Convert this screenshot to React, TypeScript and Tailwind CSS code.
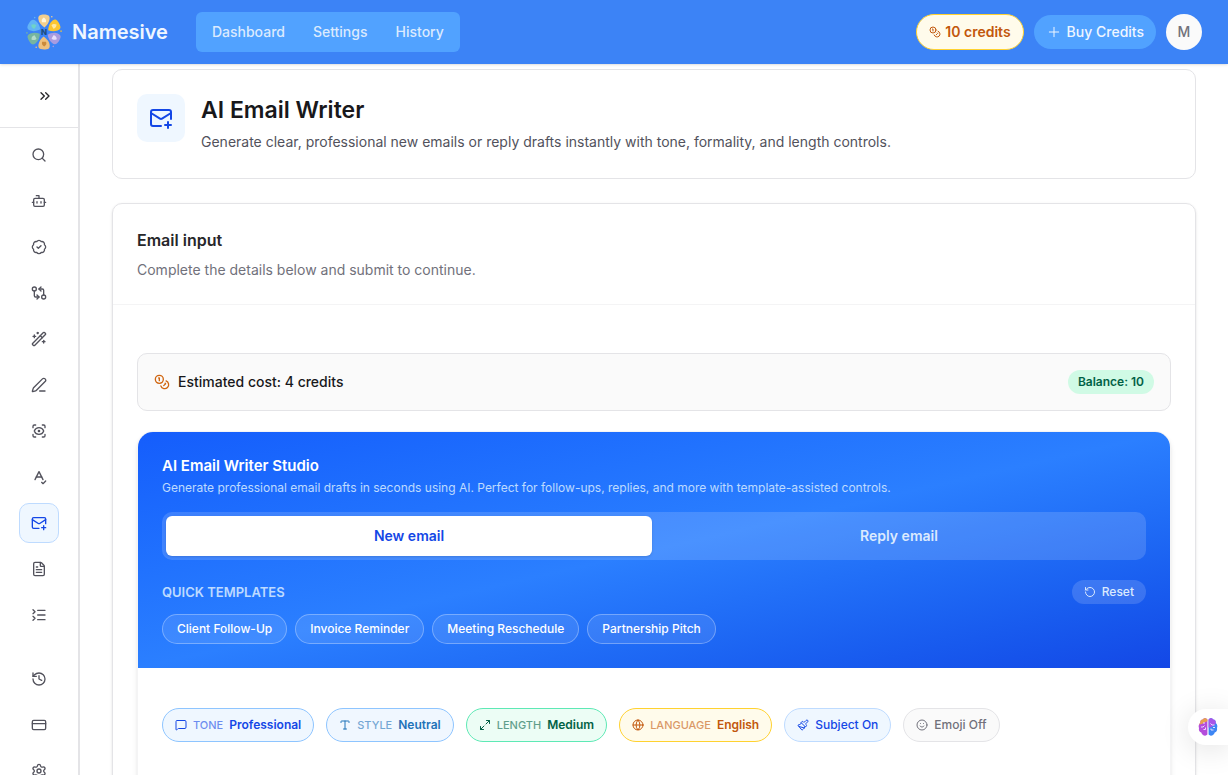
import React from "react";
import {
  BadgeCheck,
  Bot,
  ChevronsRight,
  Coins,
  CreditCard,
  FileText,
  GitCompareArrows,
  Globe,
  History,
  ListCollapse,
  MailPlus,
  Maximize2,
  MessageSquare,
  Paintbrush,
  PenLine,
  Plus,
  RotateCcw,
  ScanEye,
  Search,
  Settings,
  Smile,
  SpellCheck,
  Type,
  WandSparkles,
  type LucideIcon,
} from "lucide-react";

const TOOLS: { label: string; icon: LucideIcon; active?: boolean }[] = [
  { label: "Search", icon: Search },
  { label: "AI chat", icon: Bot },
  { label: "AI checker", icon: BadgeCheck },
  { label: "Paraphraser", icon: GitCompareArrows },
  { label: "Humanizer", icon: WandSparkles },
  { label: "Writer", icon: PenLine },
  { label: "Detector", icon: ScanEye },
  { label: "Grammar", icon: SpellCheck },
  { label: "Email writer", icon: MailPlus, active: true },
  { label: "Documents", icon: FileText },
  { label: "Summarizer", icon: ListCollapse },
];

const ACCOUNT: { label: string; icon: LucideIcon; active?: boolean }[] = [
  { label: "History", icon: History },
  { label: "Billing", icon: CreditCard },
  { label: "Settings", icon: Settings },
];

const TEMPLATES = ["Client Follow-Up", "Invoice Reminder", "Meeting Reschedule", "Partnership Pitch"];

const OPTIONS = [
  { label: "Tone", value: "Professional", icon: MessageSquare, style: "border-[#8ec5ff] bg-[#eff7ff] text-blue-700" },
  { label: "Style", value: "Neutral", icon: Type, style: "border-[#8ec5ff] bg-[#f0f7ff] text-[#1f72b8]" },
  { label: "Length", value: "Medium", icon: Maximize2, style: "border-emerald-300 bg-emerald-50 text-emerald-800" },
  { label: "Language", value: "English", icon: Globe, style: "border-amber-300 bg-amber-50 text-[#c2570c]" },
];

const PETALS = [
  { angle: 0, fill: "#f3cf8e", dot: "#fff6df" },
  { angle: 60, fill: "#fbc62f", dot: "#fde9a4" },
  { angle: 120, fill: "#a99be0", dot: "#e6dffb" },
  { angle: 180, fill: "#eec07c", dot: "#c98a3c" },
  { angle: 240, fill: "#76b5a0", dot: "#b5dccb" },
  { angle: 300, fill: "#62b4f5", dot: "#6fd3c8" },
];

function Logo() {
  return (
    <svg viewBox="0 0 36 36" className="size-9" aria-hidden="true">
      {PETALS.map((p) => (
        <g key={p.angle} transform={`rotate(${p.angle} 18 18)`}>
          <path
            d="M18.500 13.500C15.500 11.500 12.600 8.500 12.300 4.800C12.100 2.200 13.200 1 15.500.7C17.500.4 19.500.5 21.200 1C23.300 1.600 24 3 23.500 5.500C22.800 8.800 21 11.500 18.500 13.500Z"
            fill={p.fill}
          />
          <path d="M16 8.200C15 6.500 16 4.500 17.800 3.400C19.800 4.500 20.600 6.500 19.800 8.200Z" fill={p.dot} />
          <circle cx="25.800" cy="2.800" r=".8" fill={p.fill} />
        </g>
      ))}
      <text x="18" y="21" textAnchor="middle" fontSize="8" fontWeight="800" fontFamily="Inter, sans-serif" fill="#1f4c7c">
        N
      </text>
    </svg>
  );
}

function BrainIcon() {
  return (
    <svg viewBox="0 0 20 20" className="size-5" aria-hidden="true">
      <path d="M9.400 2.500C8 .6 5.600.9 4.900 2.600C3 2.700 1.900 4.300 2.300 6C.6 7.200.3 9.500 1 11C.4 13.200 1.600 15 3.300 15.500C3.800 18.200 7.500 20 9.400 17.600Z" fill="#b44ddb" />
      <path d="M9.400 2.500C8 .6 5.600.9 4.900 2.600C3 2.700 1.900 4.300 2.300 6C1.600 6.500 1.200 7 1 7.600C3.500 7.500 6 5.500 9.400 4.200Z" fill="#e8a04d" />
      <path d="M10.600 2.500C12 .6 14.400.9 15.100 2.600C17 2.700 18.100 4.300 17.700 6C19.400 7.200 19.700 9.500 19 11C19.600 13.200 18.400 15 16.700 15.500C16.200 18.200 12.500 20 10.600 17.600Z" fill="#3d86f4" />
      <path d="M10.600 2.500C12 .6 14.400.9 15.100 2.600C17 2.700 18.100 4.300 17.700 6C17 8.500 13 10.500 10.600 10.500Z" fill="#a855e8" />
      <path
        d="M3 10H5L6.500 8.500M5.500 12.500H7.500V10.500M5 6H7M12.500 6.500L14 8H16.500M13 11.500V13H15.500M15 10.500H17"
        fill="none"
        stroke="#e9ddff"
        strokeWidth="1"
      />
    </svg>
  );
}

function SideLink({ label, icon: Icon, active }: { label: string; icon: LucideIcon; active?: boolean }) {
  return (
    <a
      href="#"
      aria-label={label}
      className={`flex size-10 shrink-0 items-center justify-center rounded-[10px] border ${
        active ? "border-blue-200 bg-[#eff7ff] text-blue-700" : "border-transparent text-zinc-600"
      }`}
    >
      <Icon className="size-4" />
    </a>
  );
}

function Header() {
  return (
    <header className="relative z-10 flex h-16 shrink-0 items-center justify-between bg-[#3c83f6] px-[26px] shadow-sm">
      <div className="flex items-center gap-7">
        <a href="#" className="flex items-center gap-[10px] text-xl font-semibold text-blue-50">
          <Logo />
          Namesive
        </a>
        <nav className="flex h-10 items-center gap-7 rounded-md bg-[#51a2ff] px-4 text-sm font-medium text-blue-100">
          <a href="#">Dashboard</a>
          <a href="#">Settings</a>
          <a href="#">History</a>
        </nav>
      </div>
      <div className="flex items-center gap-[10px]">
        <a
          href="#"
          className="flex h-9 items-center gap-1 rounded-full border border-amber-300 bg-amber-50 px-3 text-sm font-semibold text-[#c2570c]"
        >
          <Coins className="size-3" />
          10 credits
        </a>
        <button type="button" className="flex h-[34px] items-center gap-[5px] rounded-full bg-[#51a2ff] px-3 text-sm font-medium text-blue-50">
          <Plus className="size-4" strokeWidth={1.5} />
          Buy Credits
        </button>
        <button type="button" className="size-9 rounded-full bg-zinc-50 text-sm font-medium text-zinc-500">
          M
        </button>
      </div>
    </header>
  );
}

function Sidebar() {
  return (
    <aside className="flex w-20 shrink-0 flex-col border-r-2 border-zinc-200 bg-white">
      <div className="flex h-16 shrink-0 items-center justify-end border-b border-zinc-200 px-[17px]">
        <button type="button" aria-label="Expand sidebar" className="flex size-8 items-center justify-center text-zinc-800">
          <ChevronsRight className="size-4" />
        </button>
      </div>
      <nav className="flex flex-col items-center gap-[6px] py-[7px]">
        {TOOLS.map((item) => (
          <SideLink key={item.label} {...item} />
        ))}
      </nav>
      <nav className="flex flex-col items-center gap-[6px] pt-[17px]">
        {ACCOUNT.map((item) => (
          <SideLink key={item.label} {...item} />
        ))}
      </nav>
    </aside>
  );
}

function Studio() {
  return (
    <section className="mt-5 overflow-hidden rounded-2xl border border-zinc-100 bg-white shadow-md">
      <div className="bg-linear-to-br from-[#155dfc] via-[#2b7fff] to-[#1447e6] p-6 text-white">
        <h3 className="text-[15px] leading-5 font-semibold">AI Email Writer Studio</h3>
        <p className="mt-1 text-xs text-blue-200">
          Generate professional email drafts in seconds using AI. Perfect for follow-ups, replies, and more with
          template-assisted controls.
        </p>
        <div className="mt-4 grid grid-cols-2 gap-1 rounded-[10px] bg-white/15 p-1 text-sm font-semibold">
          <button type="button" className="h-10 rounded-md bg-white text-blue-700 shadow-sm">
            New email
          </button>
          <button type="button" className="h-10 rounded-md text-blue-100">
            Reply email
          </button>
        </div>
        <div className="mt-5 flex items-center justify-between">
          <h4 className="text-[13px] leading-4 font-semibold text-blue-200 uppercase">Quick templates</h4>
          <button type="button" className="flex h-6 items-center gap-[6px] rounded-full bg-white/15 px-3 text-xs font-medium text-blue-100">
            <RotateCcw className="size-3" />
            Reset
          </button>
        </div>
        <div className="mt-[10px] flex flex-wrap gap-2">
          {TEMPLATES.map((name) => (
            <button key={name} type="button" className="h-[30px] rounded-full border border-white/30 bg-white/10 px-[14px] text-xs font-medium">
              {name}
            </button>
          ))}
        </div>
      </div>
      <div className="flex flex-wrap gap-3 px-6 py-10">
        {OPTIONS.map(({ label, value, icon: Icon, style }) => (
          <button key={label} type="button" className={`flex h-[34px] items-center gap-[6px] rounded-full border px-3 text-xs font-semibold ${style}`}>
            <Icon className="size-3" />
            <span className="text-[11px] font-medium uppercase opacity-60">{label}</span>
            {value}
          </button>
        ))}
        <button type="button" className="flex h-[34px] items-center gap-[6px] rounded-full border border-blue-200 bg-[#eff7ff] px-3 text-xs font-medium text-blue-700">
          <Paintbrush className="size-3" />
          Subject On
        </button>
        <button type="button" className="flex h-[34px] items-center gap-[6px] rounded-full border border-zinc-200 bg-zinc-50 px-3 text-xs font-medium text-zinc-500">
          <Smile className="size-3" />
          Emoji Off
        </button>
      </div>
      <div className="h-40" />
    </section>
  );
}

export default function App() {
  return (
    <div className="relative flex h-screen flex-col overflow-hidden bg-white font-[Inter,sans-serif] text-zinc-900">
      <Header />
      <div className="flex min-h-0 flex-1">
        <Sidebar />
        <main className="min-w-0 flex-1 overflow-hidden px-8 pt-[5px]">
          <section className="flex gap-4 rounded-[10px] border border-zinc-200 p-6">
            <div className="flex size-12 shrink-0 items-center justify-center rounded-[10px] bg-[#eff7ff] text-blue-700">
              <MailPlus className="size-6" />
            </div>
            <div>
              <h1 className="text-[23px] leading-8 font-semibold">AI Email Writer</h1>
              <p className="mt-1 text-sm leading-6 text-zinc-600">
                Generate clear, professional new emails or reply drafts instantly with tone, formality, and length controls.
              </p>
            </div>
          </section>
          <section className="mt-6 rounded-[10px] border border-zinc-200 shadow-sm">
            <div className="border-b border-zinc-100 p-6">
              <h2 className="text-base font-semibold text-zinc-800">Email input</h2>
              <p className="mt-2 text-sm text-zinc-500">Complete the details below and submit to continue.</p>
            </div>
            <div className="px-6 pt-12 pb-6">
              <div className="flex h-[58px] items-center justify-between rounded-[10px] border border-zinc-200 bg-zinc-50 px-4">
                <p className="flex items-center gap-2 text-sm font-medium">
                  <Coins className="size-4 text-[#d0650f]" />
                  Estimated cost: 4 credits
                </p>
                <span className="flex h-6 items-center rounded-full bg-emerald-100 px-[10px] text-xs font-semibold text-emerald-800">
                  Balance: 10
                </span>
              </div>
              <Studio />
            </div>
          </section>
        </main>
      </div>
      <button
        type="button"
        aria-label="Open assistant"
        className="absolute right-0 bottom-[30px] flex h-9 w-10 items-center justify-center rounded-l-full bg-white shadow-[0_4px_30px_rgba(0,0,0,0.12)]"
      >
        <BrainIcon />
      </button>
    </div>
  );
}
